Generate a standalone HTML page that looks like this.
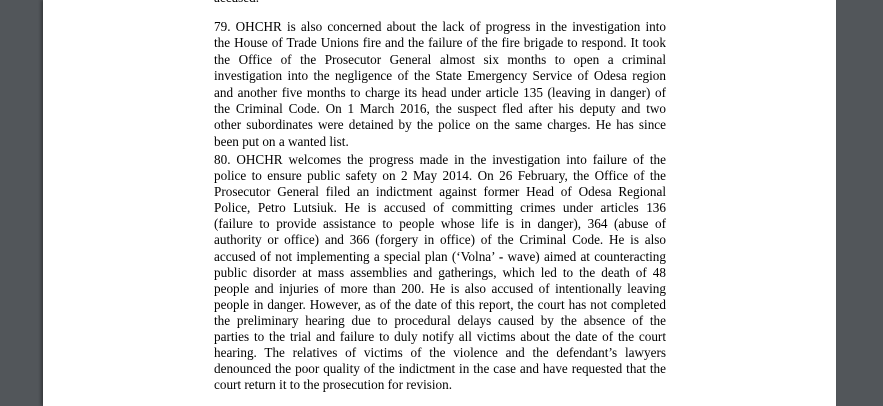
<!DOCTYPE html>
<html><head><style>
html,body{margin:0;padding:0;width:883px;height:406px;overflow:hidden;background:#52565a;}
.page{position:absolute;left:43px;top:0;width:793px;height:406px;background:#fff;box-shadow:-2px 0 3px rgba(0,0,0,.35);}
.t{position:absolute;left:171px;width:452px;font-family:"Liberation Serif",serif;font-size:13.2px;line-height:16.1px;color:#000;}
.l{display:block;text-align:justify;text-align-last:justify;white-space:nowrap;height:16.1px;}
.a .l{height:16.4px;}
.e{text-align-last:left;}
</style></head><body>
<div class="page">
<div class="t" style="top:-10px"><span class="l e">accused.</span></div>
<div class="t a" style="top:19px">
<span class="l">79. OHCHR is also concerned about the lack of progress in the investigation into</span>
<span class="l">the House of Trade Unions fire and the failure of the fire brigade to respond. It took</span>
<span class="l">the Office of the Prosecutor General almost six months to open a criminal</span>
<span class="l">investigation into the negligence of the State Emergency Service of Odesa region</span>
<span class="l">and another five months to charge its head under article 135 (leaving in danger) of</span>
<span class="l">the Criminal Code. On 1 March 2016, the suspect fled after his deputy and two</span>
<span class="l">other subordinates were detained by the police on the same charges. He has since</span>
<span class="l e">been put on a wanted list.</span>
</div>
<div class="t" style="top:152px">
<span class="l">80. OHCHR welcomes the progress made in the investigation into failure of the</span>
<span class="l">police to ensure public safety on 2 May 2014. On 26 February, the Office of the</span>
<span class="l">Prosecutor General filed an indictment against former Head of Odesa Regional</span>
<span class="l">Police, Petro Lutsiuk. He is accused of committing crimes under articles 136</span>
<span class="l">(failure to provide assistance to people whose life is in danger), 364 (abuse of</span>
<span class="l">authority or office) and 366 (forgery in office) of the Criminal Code. He is also</span>
<span class="l">accused of not implementing a special plan (‘Volna’ <b>-</b> wave) aimed at counteracting</span>
<span class="l">public disorder at mass assemblies and gatherings, which led to the death of 48</span>
<span class="l">people and injuries of more than 200. He is also accused of intentionally leaving</span>
<span class="l">people in danger. However, as of the date of this report, the court has not completed</span>
<span class="l">the preliminary hearing due to procedural delays caused by the absence of the</span>
<span class="l">parties to the trial and failure to duly notify all victims about the date of the court</span>
<span class="l">hearing. The relatives of victims of the violence and the defendant’s lawyers</span>
<span class="l">denounced the poor quality of the indictment in the case and have requested that the</span>
<span class="l e">court return it to the prosecution for revision.</span>
</div>
</div>
</body></html>
